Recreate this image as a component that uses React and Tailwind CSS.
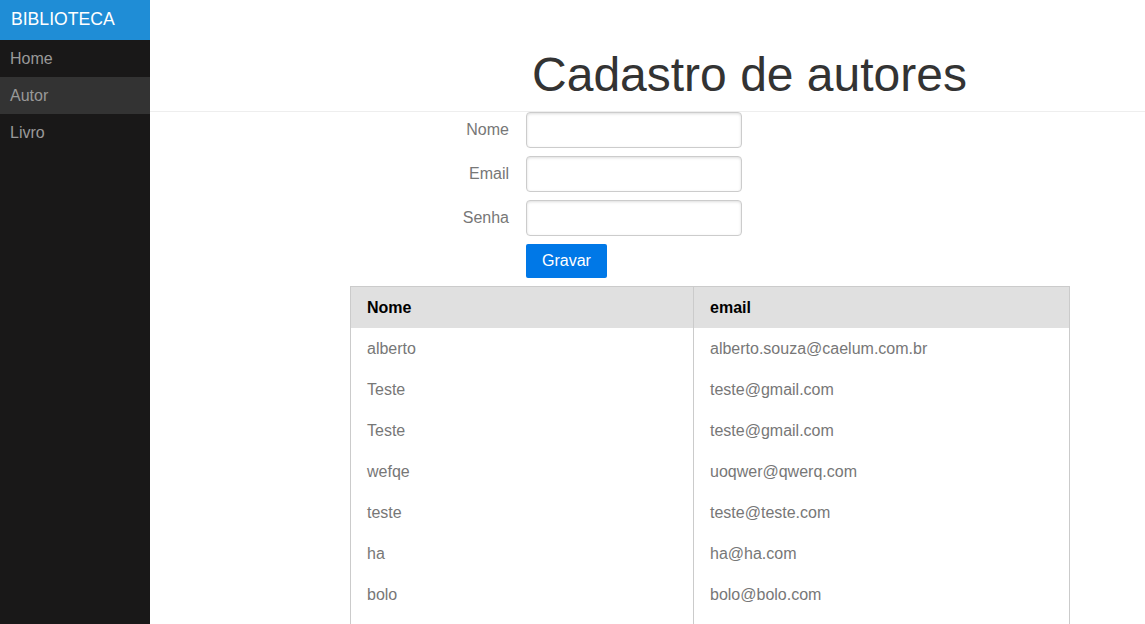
import React from 'react';

const menu = [
    { label: 'Home' },
    { label: 'Autor', selected: true },
    { label: 'Livro' },
];

const autores = [
    { nome: 'alberto', email: 'alberto.souza@caelum.com.br' },
    { nome: 'Teste', email: 'teste@gmail.com' },
    { nome: 'Teste', email: 'teste@gmail.com' },
    { nome: 'wefqe', email: 'uoqwer@qwerq.com' },
    { nome: 'teste', email: 'teste@teste.com' },
    { nome: 'ha', email: 'ha@ha.com' },
    { nome: 'bolo', email: 'bolo@bolo.com' },
    { nome: '', email: '' },
];

const Field = ({ label, type = 'text' }) => (
    <div className="flex items-center mb-2">
        <label className="w-[160px] pr-[1px] mr-4 text-right text-[16px] text-[#777]">{label}</label>
        <input
            type={type}
            className="w-[216px] h-9 px-[10px] border border-[#ccc] rounded-[4px] shadow-[inset_0_1px_3px_#ddd] outline-none"
        />
    </div>
);

const App = () => {
    return (
        <div className="flex h-[624px] overflow-hidden bg-white" style={{ fontFamily: '"Liberation Sans", Arial, sans-serif' }}>
            <aside className="w-[150px] shrink-0 bg-[#191818]">
                <div className="h-[40px] px-[11px] flex items-center bg-[#1f8dd6] text-white text-[17.6px] leading-none">
                    BIBLIOTECA
                </div>
                <ul>
                    {menu.map(item => (
                        <li
                            key={item.label}
                            className={`h-[37px] px-[10px] flex items-center text-[16px] text-[#999] ${item.selected ? 'bg-[#333]' : ''}`}
                        >
                            {item.label}
                        </li>
                    ))}
                </ul>
            </aside>

            <main className="flex-1">
                <div className="pt-[47px] pb-[8px] pl-[204px] border-b border-[#eee] text-center">
                    <h1 className="text-[48px] leading-[56px] text-[#333] font-normal">Cadastro de autores</h1>
                </div>

                <div className="ml-[200px] w-[720px]">
                    <form onSubmit={e => e.preventDefault()}>
                        <Field label="Nome" />
                        <Field label="Email" type="email" />
                        <Field label="Senha" type="password" />
                        <div className="pl-[176px]">
                            <button
                                type="submit"
                                className="h-[34px] px-4 bg-[#0078e7] text-white text-[16px] rounded-[2px]"
                            >
                                Gravar
                            </button>
                        </div>
                    </form>

                    <table className="mt-2 w-[720px] table-fixed border border-[#cbcbcb] border-collapse text-[16px]">
                        <thead className="bg-[#e0e0e0] text-black">
                            <tr>
                                <th className="w-[343px] px-4 pt-[2px] h-[41px] text-left font-bold border-r border-[#cbcbcb]">Nome</th>
                                <th className="px-4 pt-[2px] h-[41px] text-left font-bold">email</th>
                            </tr>
                        </thead>
                        <tbody className="text-[#777]">
                            {autores.map((a, i) => (
                                <tr key={i}>
                                    <td className="px-4 pt-[2px] h-[41px] border-r border-[#cbcbcb]">{a.nome}</td>
                                    <td className="px-4 pt-[2px] h-[41px]">{a.email}</td>
                                </tr>
                            ))}
                        </tbody>
                    </table>
                </div>
            </main>
        </div>
    );
};

export default App;
